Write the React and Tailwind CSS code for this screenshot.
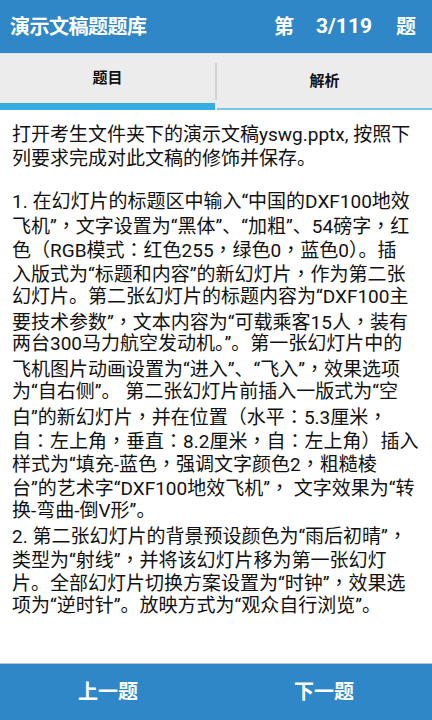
import React from "react";

const lines1 = [
  "打开考生文件夹下的演示文稿yswg.pptx, 按照下",
  "列要求完成对此文稿的修饰并保存。",
];
const lines2 = [
  "1. 在幻灯片的标题区中输入“中国的DXF100地效",
  "飞机”，文字设置为“黑体”、“加粗”、54磅字，红",
  "色（RGB模式：红色255，绿色0，蓝色0）。插",
  "入版式为“标题和内容”的新幻灯片，作为第二张",
  "幻灯片。第二张幻灯片的标题内容为“DXF100主",
  "要技术参数”，文本内容为“可载乘客15人，装有",
  "两台300马力航空发动机。”。第一张幻灯片中的",
  "飞机图片动画设置为“进入”、“飞入”，效果选项",
  "为“自右侧”。 第二张幻灯片前插入一版式为“空",
  "白”的新幻灯片，并在位置（水平：5.3厘米，",
  "自：左上角，垂直：8.2厘米，自：左上角）插入",
  "样式为“填充-蓝色，强调文字颜色2，粗糙棱",
  "台”的艺术字“DXF100地效飞机”， 文字效果为“转",
  "换-弯曲-倒V形”。",
  "2. 第二张幻灯片的背景预设颜色为“雨后初晴”，",
  "类型为“射线”，并将该幻灯片移为第一张幻灯",
  "片。全部幻灯片切换方案设置为“时钟”，效果选",
  "项为“逆时针”。放映方式为“观众自行浏览”。",
];

function Line({ text }) {
  const parts = text.split(/([，（）：])/);
  return (
    <div className="h-[23.8px] leading-[23.8px]">
      {parts.map((p, i) =>
        /^[，（）：]$/.test(p) ? (
          <span key={i} className="font-['Noto_Sans_CJK_TC',sans-serif]">
            {p}
          </span>
        ) : (
          <span key={i}>{p}</span>
        )
      )}
    </div>
  );
}

export default function App() {
  return (
    <div className="w-[432px] h-[720px] flex flex-col bg-white overflow-hidden font-['Roboto','Noto_Sans_CJK_SC',sans-serif]">
      <div className="h-[53px] bg-[#2f87c8] flex items-center px-[10px] text-white font-bold">
        <div className="text-[20px] tracking-[-0.5px]">演示文稿题题库</div>
        <div className="ml-auto flex items-center text-[20px] pr-[6px]">
          <span>第</span>
          <span className="ml-[22px] text-[21px]">3/119</span>
          <span className="ml-[24px]">题</span>
        </div>
      </div>
      <div className="h-[57px] bg-[#ececec] flex border-t border-[#e0e0e0]">
        <div className="flex-1 flex flex-col">
          <div className="flex-1 flex items-center justify-center text-[15px] font-bold text-[#111]">题目</div>
          <div className="h-[7px] bg-[#35ade0]" />
        </div>
        <div className="w-[2px] flex flex-col">
          <div className="h-[9px]" />
          <div className="h-[37px] bg-[#d2d2d2]" />
        </div>
        <div className="flex-1 flex flex-col">
          <div className="flex-1 flex items-center justify-center text-[15px] font-bold text-[#111]">解析</div>
          <div className="h-[2px] bg-[#7cc6ea]" />
        </div>
      </div>
      <div className="flex-1 pt-[13px] pl-[12px] text-[19px] text-[#111] whitespace-nowrap">
        {lines1.map((l, i) => (
          <Line key={"a" + i} text={l} />
        ))}
        <div className="h-[19px]" />
        {lines2.map((l, i) => (
          <Line key={"b" + i} text={l} />
        ))}
      </div>
      <div className="h-[57px] bg-[#2f87c8] border-t border-[#a9cbe6] flex text-white font-bold text-[20px]">
        <div className="flex-1 flex items-center justify-center">上一题</div>
        <div className="flex-1 flex items-center justify-center">下一题</div>
      </div>
    </div>
  );
}
